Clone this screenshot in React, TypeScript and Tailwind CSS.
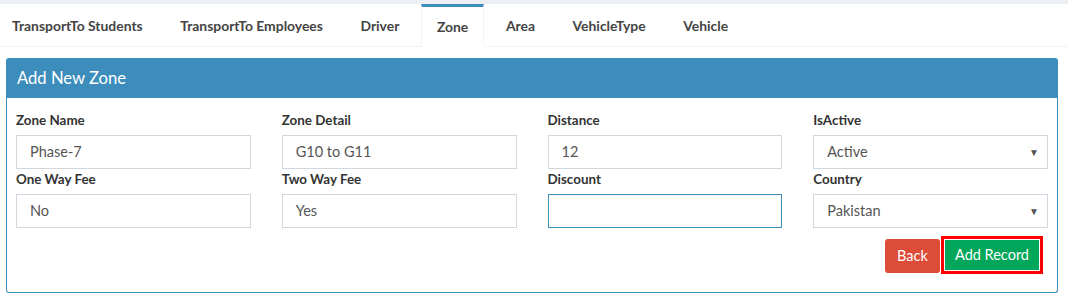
import React from 'react';

const tabs = ['TransportTo Students', 'TransportTo Employees', 'Driver', 'Zone', 'Area', 'VehicleType', 'Vehicle'];

type Field = { label: string; value: string; kind?: 'select' | 'focus' };

const fields: Field[] = [
  { label: 'Zone Name', value: 'Phase-7' },
  { label: 'Zone Detail', value: 'G10 to G11' },
  { label: 'Distance', value: '12' },
  { label: 'IsActive', value: 'Active', kind: 'select' },
  { label: 'One Way Fee', value: 'No' },
  { label: 'Two Way Fee', value: 'Yes' },
  { label: 'Discount', value: '', kind: 'focus' },
  { label: 'Country', value: 'Pakistan', kind: 'select' },
];

function FormField({ field, secondRow }: { field: Field; secondRow: boolean }) {
  return (
    <div className={secondRow ? 'mt-[3px]' : ''}>
      <div className="h-[18px] leading-[15px] text-[13.4px] font-bold text-[#333] mb-[4px]">{field.label}</div>
      <div
        className={`h-[34px] flex items-center pl-[13px] pr-[8px] border bg-white text-[14.5px] text-[#555] ${
          field.kind === 'focus' ? 'border-[#3c8dbc]' : 'border-[#d2d6de]'
        }`}
      >
        <span className="flex-1">{field.value}</span>
        {field.kind === 'select' && <span className="text-[10px] text-[#555]">▼</span>}
      </div>
    </div>
  );
}

export default function App() {
  return (
    <div className="w-[1068px] h-[300px] bg-white overflow-hidden" style={{ fontFamily: 'Lato, "Open Sans", sans-serif' }}>
      <div className="h-[4px] bg-[#ecf0f5]" />

      {/* tab strip */}
      <div className="h-[43px] flex border-b border-[#f4f4f4] -ml-[4px]">
        {tabs.map((t) => {
          const active = t === 'Zone';
          return (
            <div
              key={t}
              className={`px-[15px] mr-[5.6px] flex items-center text-[13.9px] font-bold text-[#444] border-x border-t-[3px] ${
                active ? 'border-x-[#f4f4f4] border-t-[#3c8dbc] -mb-px bg-white' : 'border-transparent'
              }`}
            >
              {t}
            </div>
          );
        })}
      </div>

      {/* panel */}
      <div className="ml-[6px] mr-[10px] mt-[11px]">
        <div className="h-[40px] bg-[#3c8dbc] rounded-t-[3px] flex items-center pl-[11px] text-[16.6px] text-white">
          Add New Zone
        </div>
        <div className="h-[195px] border border-t-0 border-[#3c8dbc] rounded-b-[3px] px-[9px] pt-[15px]">
          <div className="grid grid-cols-4 gap-x-[31px]">
            {fields.map((f, i) => (
              <FormField key={f.label} field={f} secondRow={i >= 4} />
            ))}
          </div>
          <div className="flex justify-end mt-[8px] mr-[5px]">
            <button className="mt-[3px] h-[34px] w-[55px] rounded-[3px] bg-[#dd4b39] text-white text-[14.5px] mr-[1px]">
              Back
            </button>
            <div className="border-[3px] border-[#ff0000] p-px">
              <button className="h-[30px] w-[94px] bg-[#00a65a] text-white text-[14.5px]">Add Record</button>
            </div>
          </div>
        </div>
      </div>
    </div>
  );
}
